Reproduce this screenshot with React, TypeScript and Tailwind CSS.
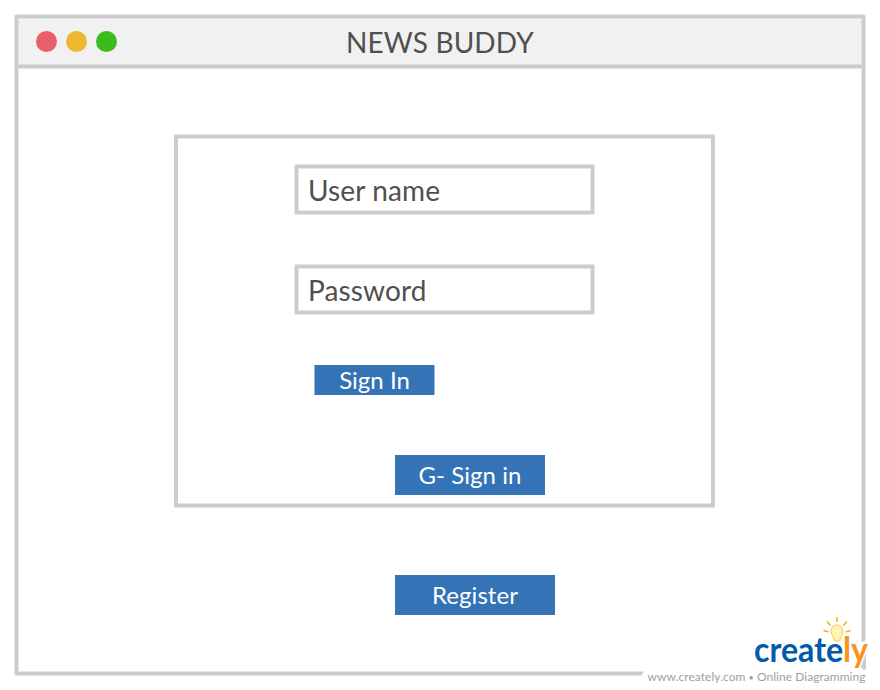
const softEdge = 'border-[3px] border-[#cccccc] shadow-[0_0_0_1px_#e6e6e6,inset_0_0_0_1px_#e6e6e6]';

function Field({ label }: { label: string }) {
  return (
    <div className={`flex h-[49px] w-[299px] items-center rounded-[1px] bg-white pl-[10px] text-[28px] leading-none tracking-[0.12px] text-[#505050] ${softEdge}`}>
      <span className="pt-[1px]">{label}</span>
    </div>
  );
}

function TitleBar() {
  return (
    <header className="flex h-[50px] items-center border-b-[3px] border-[#cccccc] bg-[#f1f1f1] shadow-[inset_0_1px_0_#e0e0e0,inset_1px_0_0_#e0e0e0,inset_-1px_0_0_#e0e0e0,inset_0_-1px_0_#dedede,0_1px_0_#e6e6e6]">
      <div className="flex gap-[9.5px] pl-[18.2px]">
        <span className="size-[20.5px] rounded-full bg-[#ea5d6a]" />
        <span className="size-[20.5px] rounded-full bg-[#ecb731]" />
        <span className="size-[20.5px] rounded-full bg-[#3cbc1c]" />
      </div>
      <h1 className="flex-1 pr-[99px] text-center text-[28px] leading-none tracking-[0.14px] text-[#505050]">NEWS BUDDY</h1>
    </header>
  );
}

function Watermark() {
  return (
    <svg className="absolute top-[610px] left-[630px]" width="250" height="80" viewBox="630 610 250 80">
      <path d="M644 670H866V690H636Z" fill="#fff" />
      <path d="M859 643L870 639V652L862 671H850Z" fill="#fff" />
      <path d="M866 653V668H860.5Z" fill="#cccccc" />
      <g stroke="#f7ab1e" strokeWidth="1.5">
        <path d="M837 617V622M827 621.5L830.5 625.5M847 621.5L843.5 625.5M823.5 630.5L828.5 632M850.5 630.5L845.5 632" />
      </g>
      <text x="754" y="662" textLength="114" lengthAdjust="spacingAndGlyphs" fontFamily="Lato, sans-serif" fontWeight="700" fontSize="35" fill="#005baa">create<tspan fill="#f7941e">ly</tspan></text>
      <path d="M834 640C834 636 831 635 831 631A6 6 0 0 1 843 631C843 635 840 636 840 640Q837 643 834 640Z" fill="#fff2b0" stroke="#fbc64d" />
      <path d="M835 632L837 630L839 632M837 631V637" fill="none" stroke="#fffbe8" />
      <text x="647.5" y="681" textLength="218" fontFamily="Lato, sans-serif" fontSize="12" fill="#a0a0a0">www.creately.com <tspan fontSize="9">•</tspan> Online Diagramming</text>
    </svg>
  );
}

export default function App() {
  return (
    <div className="relative h-[690px] w-[880px] bg-white p-[15px] font-['Lato',sans-serif]">
      <main className={`h-[660px] w-[850px] rounded-[1px] ${softEdge}`}>
        <TitleBar />
        <section className="mt-[67px] ml-[156px] flex h-[372px] w-[541px] flex-col rounded-[1px] border-x-4 border-y-[3px] border-[#cccccc] pt-[27px] pl-[117px] shadow-[0_1px_0_#e6e6e6,0_-1px_0_#e6e6e6,inset_0_1px_0_#e6e6e6,inset_0_-1px_0_#e6e6e6]">
          <Field label="User name" />
          <div className="mt-[51px]"><Field label="Password" /></div>
          <button className="mt-[51px] ml-[19px] flex h-[30px] w-[121px] shrink-0 items-center justify-center bg-[#3573b7] text-[24px] leading-none text-white shadow-[inset_1px_0_0_#9ab9db,inset_-1px_0_0_#9ab9db]">Sign In</button>
          <button className="mt-[60px] ml-[100px] flex h-10 w-[150px] shrink-0 items-center justify-center bg-[#3573b7] text-[24px] leading-none tracking-[0.05px] text-white">G- Sign in</button>
        </section>
        <button className="mt-[68px] ml-[377px] flex h-10 w-40 items-center justify-center bg-[#3573b7] text-[24px] leading-none tracking-[0.05px] text-white">Register</button>
      </main>
      <Watermark />
    </div>
  );
}
